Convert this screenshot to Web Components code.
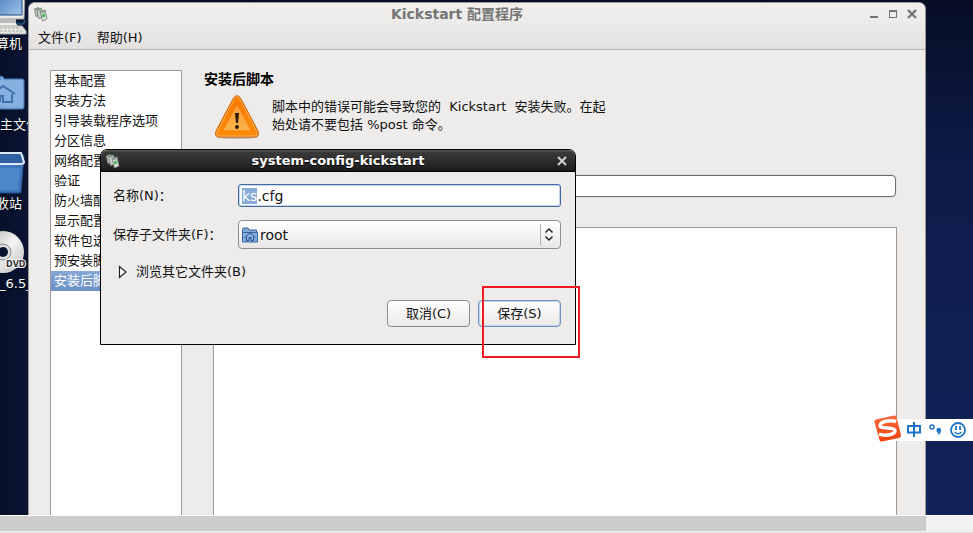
<!DOCTYPE html>
<html lang="zh-CN">
<head>
<meta charset="utf-8">
<title>Kickstart 配置程序</title>
<style>
html,body{margin:0;height:100%}
body{overflow:hidden;font:13px/18px "DejaVu Sans","Noto Sans CJK SC",sans-serif;color:#111}
</style>
</head>
<body>
<desktop-screen></desktop-screen>
<script>
function define(name, markup, setup){
  const t=document.createElement('template');
  t.innerHTML='<style>*{box-sizing:border-box}button,input,select,textarea{font:inherit;color:inherit;margin:0}button{border:0;background:none;padding:0}svg{display:block}</style>'+markup;
  customElements.define(name,class extends HTMLElement{
    constructor(){
      super();
      this.attachShadow({mode:'open'}).append(t.content.cloneNode(true));
    }
    connectedCallback(){ if(setup) setup(this.shadowRoot,this); }
  });
}

define('app-icon',`<style>:host{display:block;width:16px;height:16px}</style>
<svg width="16" height="16" viewBox="0 0 16 16"><g stroke="#858a84" stroke-width="1"><path d="M1.500 3l4-1.500L7 9l-4 1.500z" fill="#c4cac3"/><path d="M4 3.500L8.500 2l1.500 9-4.500 1.500z" fill="#d0d6cf"/><path d="M7 5.500L12 4l2 9-4.500 2z" fill="#e0e5de"/></g><circle cx="10.500" cy="9.500" r="2" fill="#5dbb68"/><path d="M3 4l3-1M8 6.500l4-1" stroke="#6f756e"/><circle cx="7" cy="4.500" r="1" fill="#68ad6e"/></svg>`);

define('desk-icon',`<style>
:host{position:absolute;display:flex;flex-direction:column;color:#fff;text-shadow:1px 1px 1px #000;white-space:nowrap}
.p{height:44px;text-shadow:none}
</style><div class="p"><slot name="picture"></slot></div><slot></slot>`);

define('section-list',`<style>
:host{display:block;background:#fff;border:1px solid #9f9a95;border-bottom:0}
ul{list-style:none;margin:0;padding:0}
button{display:block;width:100%;height:20px;padding:0 3px;text-align:left}
button[aria-current]{background:linear-gradient(#86a8d8,#6a90c5);color:#fff}
</style><nav aria-label="配置"><ul></ul></nav>`,(root)=>{
  const ul=root.querySelector('ul');
  ['基本配置','安装方法','引导装载程序选项','分区信息','网络配置','验证','防火墙配置','显示配置','软件包选择','预安装脚本','安装后脚本'].forEach((n,i)=>{
    const li=document.createElement('li'),b=document.createElement('button');
    b.type='button';b.textContent=n;
    if(i===10)b.setAttribute('aria-current','true');
    li.append(b);ul.append(li);
  });
});

define('warning-note',`<style>
:host{display:flex;gap:12px;align-items:flex-start;font-family:"DejaVu Sans","Noto Sans CJK TC",sans-serif}
p{margin:0;padding-top:4px;white-space:pre}
</style>
<svg width="46" height="46" viewBox="0 0 46 46"><defs><linearGradient id="o" x2="0" y2="1"><stop stop-color="#f57900"/><stop offset="1" stop-color="#fb8b08"/></linearGradient><linearGradient id="i" x2="0" y2="1"><stop stop-color="#fb9a34"/><stop offset="1" stop-color="#fdb44c"/></linearGradient></defs>
<ellipse cx="23" cy="43" rx="21" ry="2" fill="#b9b7b4"/>
<path d="M19.500 4Q23-.5 26.500 4L44 37Q46 42.500 41 43H5Q0 42.500 2 37z" fill="url(#o)" stroke="#d0610a"/>
<path d="M20.500 4.500Q23 1 25.500 4.500L43 38Q44 41.500 41 42H5Q2 41.500 3 38z" fill="none" stroke="#fbad55"/>
<path d="M23 12L36 36H10z" fill="url(#i)" stroke="#fda43e" stroke-linejoin="round"/>
<path d="M21 19h4l-1 10h-2z" fill="#2c1a08"/><circle cx="23" cy="33" r="2" fill="#2c1a08"/></svg>
<p><slot></slot></p>`);

define('script-panel',`<style>
:host{display:flex;flex-direction:column;min-width:0}
h2{font:inherit;font-size:14px;font-weight:bold;margin:0 0 6px;color:#000}
warning-note{margin-left:10px;height:46px}
input{display:block;height:22px;margin:35px 1px 30px 9px;border:1px solid #6f6d69;border-radius:4px;background:#fff;padding:0 5px;box-shadow:0 0 0 1px #e2e0de}
textarea{display:block;flex:1;margin-left:9px;resize:none;border:1px solid #9f9a95;border-bottom:0;background:#fff;padding:4px}
</style>
<h2>安装后脚本</h2>
<warning-note>脚本中的错误可能会导致您的&nbsp; Kickstart&nbsp; 安装失败。在起<br>始处请不要包括 %post 命令。</warning-note>
<input type="text" aria-label="解释程序"><textarea aria-label="脚本"></textarea>`);

define('kickstart-window',`<style>
:host{position:absolute;left:28px;right:47px;top:2px;bottom:0;display:flex;flex-direction:column;background:#edeceb;border:1px solid #9b9a98;border-bottom:0;border-radius:7px 7px 0 0;overflow:hidden}
header{background:linear-gradient(#f0efee,#edeceb 40%,#e2e1df);border-bottom:1px solid #b5b4b2}
.bar{display:grid;grid-template-columns:20px 1fr 60px;align-items:center;height:22px}
h1{font:inherit;font-size:14px;font-weight:bold;color:#757573;margin:0;text-align:center}
app-icon{margin-left:4px}
.ctl{display:flex;gap:5px;justify-content:flex-end;padding-right:6px}
.ctl button{width:14px;height:14px}
.menu{display:flex;gap:15px;padding:4px 9px 2px}
.menu button{height:18px}
main{flex:1;min-height:0;display:flex;gap:22px;padding:20px 28px 0 21px}
section-list{flex:0 0 132px}
script-panel{flex:1}
</style>
<header><div class="bar"><app-icon></app-icon><h1>Kickstart 配置程序</h1>
<div class="ctl"><button aria-label="最小化"><svg width="14" height="14"><path d="M3 9h8v2H3z" fill="#757573"/></svg></button><button aria-label="最大化"><svg width="14" height="14"><path d="M3 3h8v8H3zM4 5v5h6V5z" fill="#757573" fill-rule="evenodd"/></svg></button><button aria-label="关闭"><svg width="14" height="14"><path d="M3 3l8 8M11 3l-8 8" stroke="#757573" stroke-width="2.400"/></svg></button></div></div>
<div class="menu"><button>文件(F)</button><button>帮助(H)</button></div></header>
<main><section-list></section-list><script-panel></script-panel></main>`);

define('folder-select',`<style>
:host{display:grid;height:29px}
:host>*,select,svg{grid-area:1/1}
select{width:100%;height:100%;appearance:none;border:1px solid #8f8d89;border-radius:4px;background:linear-gradient(#fff,#f5f4f3 50%,#e8e7e5);padding:0 40px 0 21px;font-size:14px}
svg{pointer-events:none;align-self:center}
.f{margin-left:4px}
.a{justify-self:end;margin-right:1px}
</style>
<select aria-label="保存子文件夹(F)"><option>root</option></select>
<svg class="f" width="16" height="16" viewBox="0 0 16 16"><path d="M.5 14V2.500Q.5 1 2 1h4l1 2h7.500V14z" fill="#84a9d6" stroke="#38659f"/><path d="M.5 5.500h15v9.500H.5z" fill="#86aedd" stroke="#38659f"/><path d="M2.500 10.500L8 6l5.500 4.500M4.500 9.500v4h2.500v-3h2v3h2.500v-4" fill="none" stroke="#2d568c"/></svg>
<svg class="a" width="20" height="21" viewBox="0 0 20 21"><path d="M.5 0v21" stroke="#b5b3b0"/><path d="M5.500 8.500L9 5l3.500 3.500M5.500 12.500L9 16l3.500-3.500" fill="#fff" stroke="#222" stroke-width="1.500"/></svg>`);

define('save-dialog',`<style>
:host{position:absolute;left:100px;top:149px;width:476px;display:block;background:#edeceb;border:1px solid #000;border-radius:7px 7px 0 0;overflow:hidden}
header{display:grid;grid-template-columns:24px 1fr 24px;align-items:center;height:22px;background:linear-gradient(#555 1px,#3a3a3a 2px,#303030 45%,#1b1b1b);border-bottom:1px solid #000;color:#fff}
h2{font:inherit;font-weight:bold;margin:0;text-align:center;text-shadow:0 1px 1px #000}
app-icon{margin-left:4px}
header button{justify-self:end;margin-right:6px}
form{padding:12px 14px 17px 12px}
.row{display:grid;grid-template-columns:125px 1fr;align-items:center;margin-bottom:13px}
label{font-family:"DejaVu Sans","Noto Sans CJK TC",sans-serif}
.row input{width:100%;height:23px;border:1px solid #44699f;border-radius:3px;background:#fff;padding:0 3px;font-size:14px;outline:0;caret-color:transparent;box-shadow:inset 0 0 0 1px #c6d7ed}
input::selection{background:#86abd9;color:#fff}
.exp{display:flex;gap:8px;align-items:center;height:20px;margin-left:5px}
.acts{display:flex;justify-content:flex-end;gap:8px;margin-top:18px}
.acts button{width:83px;height:27px;border:1px solid #8f8d89;border-radius:4px;background:linear-gradient(#fff,#f5f4f3 50%,#ebeae8)}
.acts .ok{border-color:#6c8fbe;box-shadow:inset 0 0 0 1px #c2d4eb}
</style>
<header><app-icon></app-icon><h2>system-config-kickstart</h2><button aria-label="关闭"><svg width="14" height="14"><path d="M3 3l8 8M11 3l-8 8" stroke="#d0d0d0" stroke-width="2"/></svg></button></header>
<form>
<div class="row"><label for="name">名称(N)：</label><input id="name" type="text" value="ks.cfg"></div>
<div class="row"><label>保存子文件夹(F)：</label><folder-select></folder-select></div>
<button type="button" class="exp" aria-expanded="false"><svg width="10" height="14"><path d="M1.500 1.500v11L8 7z" fill="#fff" stroke="#222" stroke-width="1.200"/></svg>浏览其它文件夹(B)</button>
<div class="acts"><button type="button">取消(C)</button><button type="button" class="ok">保存(S)</button></div>
</form>`,(root)=>{
  const i=root.getElementById('name');
  i.focus();i.setSelectionRange(0,2);
  const pick=root.querySelector('folder-select');
  root.querySelector('label:not([for])').addEventListener('click',()=>pick.shadowRoot.querySelector('select').focus());
});

define('input-toolbar',`<style>
:host{position:absolute;right:0;top:415px;display:flex;align-items:center;height:28px}
.logo{z-index:1}
.keys{display:flex;align-items:center;background:#fff;height:22px;margin:2px 0 0 -8px;padding:0 7px 0 12px;gap:8px}
</style>
<svg class="logo" width="30" height="28" viewBox="0 0 30 28"><defs><linearGradient id="s" x2="0" y2="1"><stop stop-color="#f9693a"/><stop offset="1" stop-color="#ed4210"/></linearGradient></defs><path d="M3 4.500L21 .5Q23 0 23.500 2L28 20Q28.500 22 26 23L9 26.500Q7 27 6.500 25L1.500 7Q1 5 3 4.500z" fill="url(#s)"/><path d="M23 6.500C17 4.500 7.500 6.500 7 10.500C6.500 14.500 21 11.500 22 15.500C22.500 19.500 12 21.500 6 19" fill="none" stroke="#fff" stroke-width="3.500"/></svg>
<div class="keys"><button aria-label="中文"><svg width="14" height="16" viewBox="0 0 14 16"><path d="M1 4h12v6.500H1zM7 0v15" fill="none" stroke="#1e74c8" stroke-width="2"/></svg></button><button aria-label="标点"><svg width="13" height="16" viewBox="0 0 13 16"><circle cx="3" cy="5" r="2" fill="none" stroke="#1e74c8" stroke-width="1.500"/><path d="M7.500 8.500a2.300 2.300 0 1 1 4.500 0c0 2.500-1.500 4.500-4 5 1-1 1.500-1.500 1.500-2.500-1 0-2-1-2-2.500z" fill="#1e74c8"/></svg></button><button aria-label="表情"><svg width="16" height="16" viewBox="0 0 16 16"><circle cx="8" cy="8" r="7" fill="none" stroke="#1e74c8" stroke-width="1.800"/><path d="M6 4v4M10 4v4" stroke="#1e74c8" stroke-width="1.800"/><path d="M4.500 10Q8 13.500 11.500 10" fill="none" stroke="#1e74c8" stroke-width="1.300"/></svg></button></div>`);

define('scroll-track',`<style>
:host{display:block;height:18px;background:#f1f1f1;border-top:1px solid #fff;border-bottom:1px solid #e0e0e0}
div{height:15px;margin-right:47px;background:#cdcdcd}
</style><div></div>`);

define('desktop-screen',`<style>
:host{display:flex;flex-direction:column;height:100%}
.area{position:relative;flex:1;min-height:0;overflow:hidden;background:linear-gradient(to right,#071029 0,#0a1433 28px,transparent 60px),linear-gradient(#060e25,#0e1c4b 35%,#132259)}
.mark{position:absolute;left:482px;top:286px;width:98px;height:72px;border:2px solid #ed1c24;pointer-events:none}
</style>
<div class="area">
<desk-icon style="left:-4px;top:-9px"><svg slot="picture" width="32" height="44" viewBox="0 0 32 44"><defs><linearGradient id="m" x2="1" y2="1"><stop stop-color="#3f78b8"/><stop offset="1" stop-color="#a2c4e8"/></linearGradient></defs><path d="M0 0h29l-1 28H0z" fill="#ecebe8" stroke="#999"/><path d="M0 0h26v24H0z" fill="url(#m)" stroke="#1e4b84"/><path d="M2 28h18v4H2z" fill="#bbb"/><path d="M0 32h20l2 3h-22z" fill="#f0efec"/><path d="M0 35h26l4 5v3H0z" fill="#e7e6e2" stroke="#aaa"/><path d="M0 37h25M0 40h27" stroke="#aaa" stroke-dasharray="3 1"/><path d="M20 32q8 3 9-3" fill="none" stroke="#24496e" stroke-width="2"/></svg>算机</desk-icon>
<desk-icon style="left:0;top:72px"><svg slot="picture" width="28" height="44" viewBox="0 0 28 44"><path d="M0 4l3 1 1 2h18q2 0 2 2v26q0 2-2 2H0z" fill="#7aa8dc" stroke="#477bb6"/><path d="M0 8h23v27H0z" fill="#86b0e0"/><path d="M-8 22L3 14l12 8M0 30v-6h3v6h9v-8" fill="none" stroke="#3e6fa9" stroke-width="2"/></svg>主文件</desk-icon>
<desk-icon style="left:-4px;top:151px"><svg slot="picture" width="32" height="44" viewBox="0 0 32 44"><path d="M0 4h28l-3 37q0 1-2 1H0z" fill="#3d76bb" stroke="#234f8a"/><path d="M0 2h24l4 11H0z" fill="#2f609f"/><path d="M0 2h25l3 9q0 2-3 2H0" fill="none" stroke="#dde9f6" stroke-width="2"/><path d="M0 17h24l-2 22H0z" fill="#4c87c9"/></svg>收站</desk-icon>
<desk-icon style="left:-1px;top:231px"><svg slot="picture" width="30" height="44" viewBox="0 0 30 44"><defs><linearGradient id="d" x2="1" y2="1"><stop stop-color="#aaa"/><stop offset=".5" stop-color="#f4f4f4"/><stop offset="1" stop-color="#bbb"/></linearGradient></defs><circle cx="4" cy="21" r="21" fill="url(#d)"/><circle cx="4" cy="21" r="8" fill="#ddd" stroke="#888"/><circle cx="4" cy="21" r="5" fill="#091331"/><text x="7" y="36" font-family="DejaVu Sans" font-size="8" font-weight="bold" fill="#333" stroke="#fff" stroke-width="2" paint-order="stroke">DVD</text></svg>_6.5_</desk-icon>
<kickstart-window></kickstart-window>
<save-dialog></save-dialog>
<div class="mark"></div>
<input-toolbar></input-toolbar>
</div>
<scroll-track></scroll-track>`);
</script>
</body>
</html>
